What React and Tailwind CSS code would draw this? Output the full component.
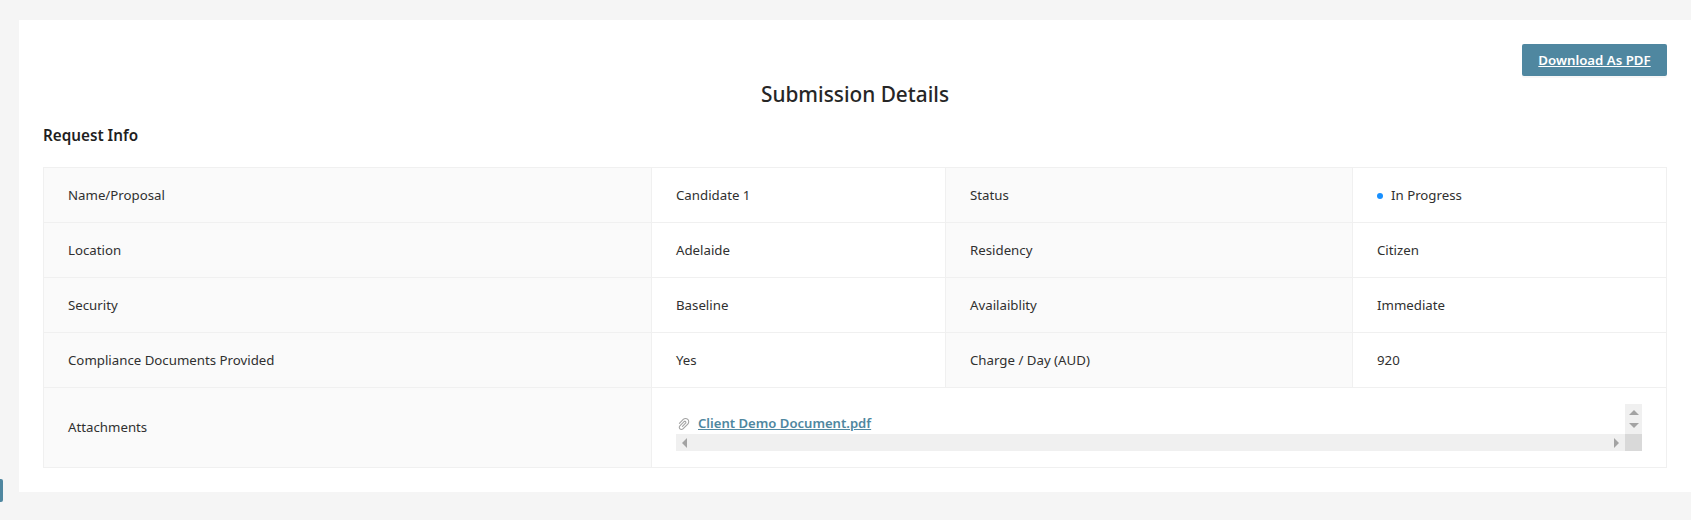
import { AiOutlinePaperClip } from "react-icons/ai";

const FONT = "font-['Noto_Sans','Open_Sans',sans-serif]";

function Label({ children }) {
  return <td className="h-[55px] border border-[#f0f0f0] bg-[#fafafa] px-6 pt-[2px] align-middle">{children}</td>;
}
function Value({ children }) {
  return <td className="h-[55px] border border-[#f0f0f0] bg-white px-6 pt-[2px] align-middle">{children}</td>;
}

function Triangle({ dir }) {
  const pts = { up: "0,6 10,6 5,1", down: "0,1 10,1 5,6", left: "6,0 6,10 1,5", right: "1,0 1,10 6,5" }[dir];
  const size = dir === "up" || dir === "down" ? "w-[10px] h-[7px]" : "w-[7px] h-[10px]";
  return (
    <svg viewBox={dir === "up" || dir === "down" ? "0 0 10 7" : "0 0 7 10"} className={size}>
      <polygon points={pts} fill="#a3a3a3" />
    </svg>
  );
}

export default function App() {
  return (
    <div className={`relative h-[520px] overflow-hidden bg-[#f5f5f5] pt-5 pl-[19px] text-[13.25px] text-[#303030] ${FONT}`}>
      <div className="h-[472px] bg-white px-6 pt-6">
        <div className="flex justify-end">
          <a href="#" className="flex h-8 w-[145px] items-center justify-center rounded-[2px] bg-[#4f87a0] pt-[2px] text-[13.25px] font-semibold text-white underline shadow-[0_2px_0_rgba(0,0,0,0.03)]">
            Download As PDF
          </a>
        </div>
        <h1 className="mt-[3px] text-center text-[20.8px] leading-[30px] font-medium text-[#262626]">Submission Details</h1>
        <h2 className="mt-[14px] text-[15.25px] leading-[24px] font-semibold text-[#1f1f1f]">Request Info</h2>
        <table className="mt-[20px] w-[1623px] table-fixed border-collapse">
          <colgroup>
            <col className="w-[608px]" />
            <col className="w-[294px]" />
            <col className="w-[407px]" />
            <col className="w-[314px]" />
          </colgroup>
          <tbody>
            <tr>
              <Label>Name/Proposal</Label>
              <Value>Candidate 1</Value>
              <Label>Status</Label>
              <Value>
                <span className="flex items-center gap-2">
                  <span className="h-[6px] w-[6px] rounded-full bg-[#1890ff]" />
                  In Progress
                </span>
              </Value>
            </tr>
            <tr>
              <Label>Location</Label>
              <Value>Adelaide</Value>
              <Label>Residency</Label>
              <Value>Citizen</Value>
            </tr>
            <tr>
              <Label>Security</Label>
              <Value>Baseline</Value>
              <Label>Availaiblity</Label>
              <Value>Immediate</Value>
            </tr>
            <tr>
              <Label>Compliance Documents Provided</Label>
              <Value>Yes</Value>
              <Label>Charge / Day (AUD)</Label>
              <Value>920</Value>
            </tr>
            <tr>
              <td className="h-[80px] border border-[#f0f0f0] bg-[#fafafa] px-6 align-middle">Attachments</td>
              <td colSpan={3} className="h-[80px] border border-[#f0f0f0] bg-white px-6 align-middle">
                <div className="flex h-[47px] w-[966px] flex-col">
                  <div className="flex h-[30px] flex-1">
                    <div className="flex flex-1 items-end gap-[6px] pb-[1px]">
                      <AiOutlinePaperClip className="mb-[1px] h-[16px] w-[16px] text-[#a3a3a3]" />
                      <a href="#" className="text-[13.1px] leading-[20px] font-semibold text-[#4f87a0] underline">Client Demo Document.pdf</a>
                    </div>
                    <div className="flex w-[17px] flex-col items-center justify-between bg-[#f0f0f0] py-[5px]">
                      <Triangle dir="up" />
                      <Triangle dir="down" />
                    </div>
                  </div>
                  <div className="flex h-[17px]">
                    <div className="flex flex-1 items-center justify-between bg-[#f0f0f0] px-[5px]">
                      <Triangle dir="left" />
                      <Triangle dir="right" />
                    </div>
                    <div className="w-[17px] bg-[#d9d9d9]" />
                  </div>
                </div>
              </td>
            </tr>
          </tbody>
        </table>
      </div>
      <div className="absolute top-[479px] left-0 h-[23px] w-[3px] rounded-r-[2px] bg-[#4f87a0]" />
    </div>
  );
}
